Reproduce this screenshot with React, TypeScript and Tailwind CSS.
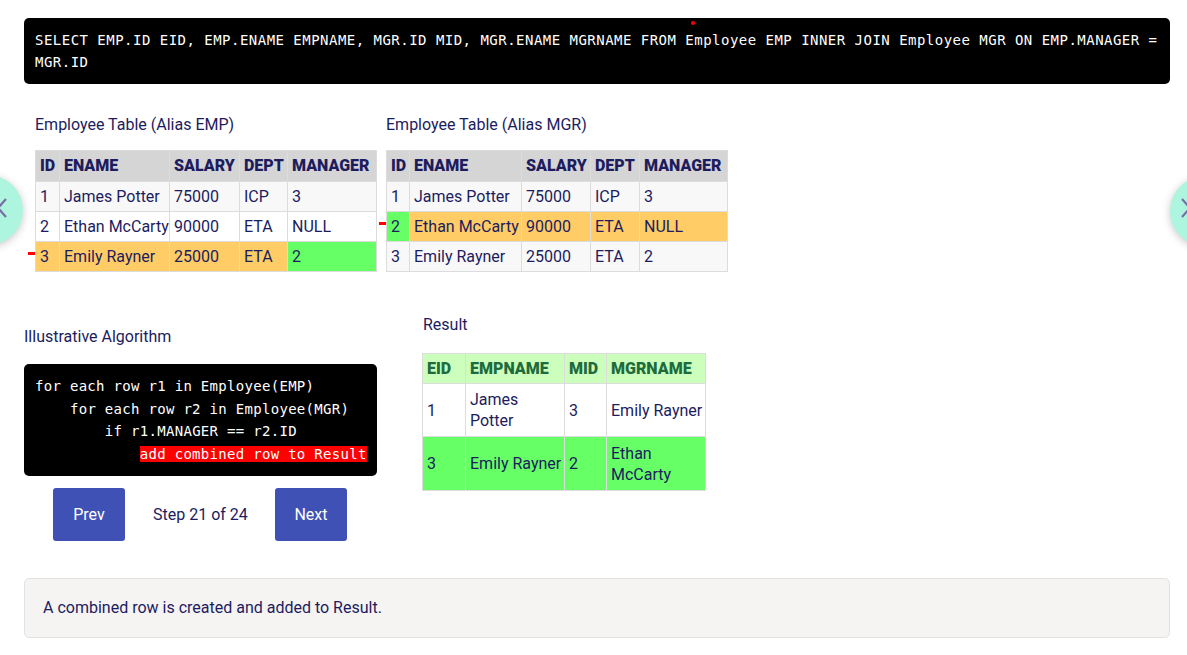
import React from "react";

const NAVY = "text-[#1c1c5e]";

function Cell({
  children,
  bg,
  head,
  marker,
  h,
}: {
  children: React.ReactNode;
  bg: string;
  head?: boolean;
  marker?: boolean;
  h: string;
}) {
  return (
    <div
      className={`relative flex items-center pl-[4px] whitespace-nowrap ${h} ${bg} ${
        head ? "font-black" : ""
      }`}
    >
      {marker && (
        <span className="absolute left-[-8px] top-[10px] h-[3px] w-[7px] bg-[#ff0000]" />
      )}
      {children}
    </div>
  );
}

const rows: (string | number)[][] = [
  [1, "James Potter", 75000, "ICP", "3"],
  [2, "Ethan McCarty", 90000, "ETA", "NULL"],
  [3, "Emily Rayner", 25000, "ETA", "2"],
];
const heads = ["ID", "ENAME", "SALARY", "DEPT", "MANAGER"];

function EmpTable({
  cols,
  hlRow,
  greenCol,
}: {
  cols: string;
  hlRow: number;
  greenCol: number;
}) {
  return (
    <div className={`grid ${cols} gap-px bg-[#dcdcdc] p-px w-fit`}>
      {heads.map((h) => (
        <Cell key={h} bg="bg-[#d5d5d5]" head h="h-[30px]">
          {h}
        </Cell>
      ))}
      {rows.map((r, ri) =>
        r.map((v, ci) => {
          let bg = ri === 1 ? "bg-white" : "bg-[#f8f8f8]";
          if (ri === hlRow) bg = ci === greenCol ? "bg-[#66ff66]" : "bg-[#ffcc66]";
          return (
            <Cell
              key={ri + "-" + ci}
              bg={bg}
              h="h-[29px]"
              marker={ri === hlRow && ci === 0}
            >
              {v}
            </Cell>
          );
        })
      )}
    </div>
  );
}

export default function App() {
  return (
    <div
      className={`relative min-h-screen overflow-hidden bg-white pl-6 pr-[17px] pt-[18px] font-['Roboto',sans-serif] text-[16px] ${NAVY}`}
    >
      {/* SQL box */}
      <div className="relative rounded-[5px] bg-black px-[11px] py-[11px] font-['DejaVu_Sans_Mono',monospace] text-[14px] leading-[22px] tracking-[0.48px] text-white">
        SELECT EMP.ID EID, EMP.ENAME EMPNAME, MGR.ID MID, MGR.ENAME MGRNAME FROM
        Employee EMP INNER JOIN Employee MGR ON EMP.MANAGER = MGR.ID
        <span className="absolute left-[667px] top-[3px] h-[4px] w-[4px] rounded-full bg-[#ff0000]" />
      </div>

      {/* Tables */}
      <div className="mt-[31px] flex gap-[9px] pl-[11px]">
        <div>
          <div className="mb-[15px] h-[20px] leading-[20px]">Employee Table (Alias EMP)</div>
          <EmpTable cols="grid-cols-[23px_109px_69px_47px_88px]" hlRow={2} greenCol={4} />
        </div>
        <div>
          <div className="mb-[15px] h-[20px] leading-[20px]">Employee Table (Alias MGR)</div>
          <EmpTable cols="grid-cols-[22px_111px_68px_48px_87px]" hlRow={1} greenCol={0} />
        </div>
      </div>

      {/* Algorithm + Result */}
      <div className="mt-[43px] flex items-start">
        <div className="w-[353px] pt-[12px]">
          <div className="mb-[17px] h-[20px] leading-[20px]">Illustrative Algorithm</div>
          <div className="rounded-[5px] bg-black px-[11px] py-[11px] font-['DejaVu_Sans_Mono',monospace] text-[14px] leading-[22.5px] tracking-[0.3px] whitespace-pre text-white">
            <div>for each row r1 in Employee(EMP)</div>
            <div>{"    "}for each row r2 in Employee(MGR)</div>
            <div>{"        "}if r1.MANAGER == r2.ID</div>
            <div>
              {"            "}
              <span className="bg-[#ff0000]">add combined row to Result</span>
            </div>
          </div>
          <div className="mt-[12px] flex items-center pl-[29px]">
            <button className="h-[53px] w-[72px] rounded-[3px] bg-[#3f51b5] text-white">Prev</button>
            <span className="ml-[28px] w-[94px] whitespace-nowrap text-center">Step 21 of 24</span>
            <button className="ml-[28px] h-[53px] w-[72px] rounded-[3px] bg-[#3f51b5] text-white">Next</button>
          </div>
        </div>
        <div className="ml-[45px]">
          <div className="mb-[18px] h-[20px] pl-px leading-[20px]">Result</div>
          <div className="grid w-fit grid-cols-[42px_98px_41px_98px] gap-px bg-[#dcdcdc] p-px leading-[21px]">
            {["EID", "EMPNAME", "MID", "MGRNAME"].map((h) => (
              <div key={h} className="flex h-[29px] items-center bg-[#ccffbb] pl-[4px] font-black text-[#1e6b3e]">
                {h}
              </div>
            ))}
            <div className="flex h-[52px] items-center bg-white pl-[4px]">1</div>
            <div className="flex h-[52px] items-center bg-white pl-[4px]">
              <span>
                James
                <br />
                Potter
              </span>
            </div>
            <div className="flex h-[52px] items-center bg-white pl-[4px]">3</div>
            <div className="flex h-[52px] items-center whitespace-nowrap bg-white pl-[4px]">Emily Rayner</div>
            <div className="flex h-[53px] items-center bg-[#66ff66] pl-[4px]">3</div>
            <div className="flex h-[53px] items-center whitespace-nowrap bg-[#66ff66] pl-[4px]">Emily Rayner</div>
            <div className="flex h-[53px] items-center bg-[#66ff66] pl-[4px]">2</div>
            <div className="flex h-[53px] items-center bg-[#66ff66] pl-[4px]">
              <span>
                Ethan
                <br />
                McCarty
              </span>
            </div>
          </div>
        </div>
      </div>

      {/* Message */}
      <div className="mt-[37px] flex h-[60px] items-center rounded-[5px] border border-[#e2e2e2] bg-[#f6f3f3] pl-[18px]">
        A combined row is created and added to Result.
      </div>

      {/* Nav circles */}
      <div className="absolute left-[-47px] top-[175px] h-[70px] w-[70px] rounded-full bg-[#aef5df] shadow-[0_2px_8px_rgba(0,0,0,0.22)]" />
      <svg className="absolute left-0 top-[195px]" width="10" height="30" viewBox="0 0 10 30">
        <polyline points="6,4 -2,13 6,22" fill="none" stroke="#7a6ea6" strokeWidth="2.2" />
      </svg>
      <div className="absolute left-[1170px] top-[176px] h-[70px] w-[70px] rounded-full bg-[#aef5df] shadow-[0_2px_8px_rgba(0,0,0,0.22)]" />
      <svg className="absolute left-[1180px] top-[195px]" width="10" height="30" viewBox="0 0 10 30">
        <polyline points="2,4 10,13 2,22" fill="none" stroke="#7a6ea6" strokeWidth="2.2" />
      </svg>
    </div>
  );
}
